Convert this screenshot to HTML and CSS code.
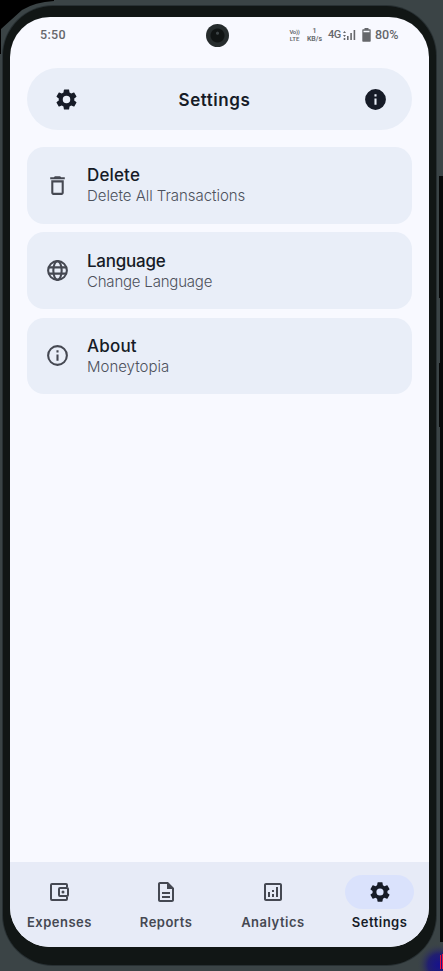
FILE: index.html
```html
<!DOCTYPE html>
<html lang="en">
<head>
<meta charset="utf-8">
<title>Settings</title>
<meta name="viewport" content="width=device-width, initial-scale=1">
<link rel="stylesheet" href="styles.css">
</head>
<body>
<svg class="casing" viewBox="0 0 443 971" aria-hidden="true">
  <defs><radialGradient id="glow"><stop offset="0" stop-color="#17128c"/><stop offset=".5" stop-color="#211f70"/><stop offset="1" stop-color="#3b4446" stop-opacity="0"/></radialGradient></defs>
  <path fill="#3b4446" d="M0 0h443v971H0z"/>
  <path fill="#000" d="M0 0h54v1Q35 2 22 10L1 29v25H0z"/>
  <path fill="#070909" d="M439 176h4v766h-3V427h-1v-64h1v-65h-1z"/>
  <circle cx="439" cy="965" r="22" fill="url(#glow)"/>
  <path fill="#ed1245" d="M440 955h1v14h-1zM442 954h1v15h-1z"/>
  <rect x="2" y="5" width="435" height="961" rx="51" fill="#283033"/>
  <rect x="3" y="6" width="433" height="959" rx="50" fill="#111615"/>
</svg>
<div class="screen">
  <header class="status">
    <span class="clock">5:50</span>
    <div class="indicators">
      <span class="volte"><b>Vo))</b><b>LTE</b></span>
      <span class="speed"><b>1</b><b>KB/s</b></span>
      <span class="net">4G</span>
      <svg class="signal" viewBox="0 0 13 12"><path fill="#65676b" d="M0 4l1.5-2L3 4zM0 6l1.5 2L3 6zM.7 9h1.6v2H.7zM4 7h1.6v4H4zM7.3 4h1.6v7H7.3zM10.6 1h1.6v10h-1.6z"/></svg>
      <svg class="battery" viewBox="0 0 9 14"><path fill="#65676b" d="M2.5 0h4v1.3H8q.7 0 .7.7v11q0 .7-.7.7H1q-.7 0-.7-.7V2q0-.7.7-.7h1.5z"/><path fill="#f8f9ff" d="M1.5 2.7h6v1.6h-6z"/></svg>
      <span class="percent">80%</span>
    </div>
    <span class="camera"></span>
  </header>
  <main>
    <div class="titlebar">
      <svg class="icon" viewBox="0 0 24 24"><use href="#gear"/></svg>
      <h1>Settings</h1>
      <svg class="icon" viewBox="0 0 24 24"><path d="M12 2a10 10 0 1 0 0 20 10 10 0 0 0 0-20zm1 15h-2v-6h2zm0-8h-2V7h2z"/></svg>
    </div>
    <section class="card">
      <svg class="icon" viewBox="0 0 24 24"><path d="M6 19c0 1.1.9 2 2 2h8c1.100 0 2-.9 2-2V7H6zM8 9h8v10H8zm7.500-5-1-1h-5l-1 1H5v2h14V4z"/></svg>
      <div><h2 class="delete">Delete</h2><p class="delete-note">Delete All Transactions</p></div>
    </section>
    <section class="card">
      <svg class="icon line" viewBox="0 0 24 24"><circle cx="12" cy="12" r="9"/><ellipse cx="12" cy="12" rx="4" ry="9"/><path d="M3.600 9h16.800M3.600 15h16.800"/></svg>
      <div><h2 class="language">Language</h2><p class="language-note">Change Language</p></div>
    </section>
    <section class="card">
      <svg class="icon" viewBox="0 0 24 24"><path d="M11 7h2v2h-2zm0 4h2v6h-2zm1-9a10 10 0 1 0 0 20 10 10 0 0 0 0-20zm0 18a8 8 0 1 1 0-16 8 8 0 0 1 0 16z"/></svg>
      <div><h2 class="about">About</h2><p>Moneytopia</p></div>
    </section>
  </main>
  <nav>
    <a class="tab"><span class="pill"><svg class="icon line" viewBox="0 0 24 24"><path d="M20 7V5q0-1-1-1H5Q4 4 4 5v14q0 1 1 1h14q1 0 1-1v-2"/><rect x="12" y="8" width="9" height="8" rx="1"/><circle class="dot" cx="16" cy="12" r="1.500"/></svg></span><span>Expenses</span></a>
    <a class="tab"><span class="pill"><svg class="icon" viewBox="0 0 24 24"><path d="M8 16h8v2H8zm0-4h8v2H8zm6-10H6c-1.100 0-2 .9-2 2v16c0 1.100.9 2 2 2h12c1.100 0 2-.9 2-2V8zm4 18H6V4h7v5h5z"/></svg></span><span>Reports</span></a>
    <a class="tab"><span class="pill"><svg class="icon" viewBox="0 0 24 24"><path d="M19 3H5c-1.100 0-2 .9-2 2v14c0 1.100.9 2 2 2h14c1.100 0 2-.9 2-2V5c0-1.100-.9-2-2-2zm0 16H5V5h14zM7 12h2v5H7zm8-5h2v10h-2zm-4 7h2v3h-2zm0-4h2v2h-2z"/></svg></span><span>Analytics</span></a>
    <a class="tab active"><span class="pill"><svg class="icon" viewBox="0 0 24 24"><path id="gear" d="M19.500 12c0-.3 0-.6-.1-.9l2-1.600c.2-.1.200-.4.100-.6l-2-3.500c-.1-.2-.4-.3-.6-.2l-2.400 1a7 7 0 0 0-1.600-.9l-.4-2.600c0-.3-.2-.4-.5-.4h-4c-.3 0-.5.200-.5.400l-.4 2.600a7 7 0 0 0-1.600.9l-2.400-1c-.2-.1-.5 0-.6.2l-2 3.500c-.1.200-.1.500.1.600l2 1.600a8 8 0 0 0 0 1.800l-2 1.600c-.2.100-.2.400-.1.600l2 3.500c.1.200.4.300.6.200l2.400-1c.5.400 1 .7 1.600.9l.4 2.600c0 .3.200.4.500.4h4c.3 0 .5-.2.500-.4l.4-2.600a7 7 0 0 0 1.600-.9l2.400 1c.2.100.5 0 .6-.2l2-3.500c.1-.2.100-.5-.1-.6l-2-1.600c.1-.3.100-.6.100-.9zM12 15.600a3.600 3.600 0 1 1 0-7.200 3.600 3.600 0 0 1 0 7.200z"/></svg></span><span>Settings</span></a>
  </nav>
</div>
</body>
</html>
```
FILE: styles.css
```css
* { box-sizing: border-box; }
body {
  margin: 0;
  width: 443px;
  height: 971px;
  padding: 17px 14px 24px 10px;
  position: relative;
  overflow: hidden;
  font-family: Inter, "Liberation Sans", sans-serif;
  color: #161b27;
}
.casing { position: absolute; inset: 0; width: 443px; height: 971px; }
.screen {
  position: relative;
  height: 930px;
  border-radius: 40px;
  overflow: hidden;
  background: #f8f9ff;
  display: flex;
  flex-direction: column;
}
.status {
  position: relative;
  height: 51px;
  flex: none;
  padding: 9px 30px 0;
  display: flex;
  justify-content: space-between;
  align-items: flex-start;
  font: 500 12.500px/18px Roboto, sans-serif;
  color: #65676b;
}
.clock { letter-spacing: .3px; }
.indicators { display: flex; align-items: center; height: 17px; }
.volte, .speed { display: flex; flex-direction: column; align-items: center; }
.volte b, .speed b { font-weight: 600; }
.volte { width: 11px; margin-right: 6px; font-size: 6px; line-height: 7px; }
.volte b:first-child { letter-spacing: -.3px; }
.speed { width: 17px; margin-right: 5px; font-size: 7px; line-height: 8px; }
.net { font-size: 11px; width: 13px; letter-spacing: -.6px; margin-right: 2px; }
.signal { width: 13px; height: 12px; margin-right: 6px; }
.battery { width: 9px; height: 14px; margin-right: 4px; }
.percent { font-size: 12.500px; width: 24px; }
.camera {
  position: absolute;
  left: 196px;
  top: 7px;
  width: 23px;
  height: 23px;
  border-radius: 50%;
  background: radial-gradient(circle at 50% 40%, #3d4446 0 1px, transparent 2px), radial-gradient(circle, #101414 0 6.500px, #262c2d 7.500px);
}
main { flex: 1; padding: 0 17px; }
h1, h2, p { margin: 0; }
.icon { width: 24px; height: 24px; display: block; fill: currentColor; flex: none; }
.line { fill: none; stroke: currentColor; stroke-width: 2; }
.dot { fill: currentColor; stroke: none; }
.titlebar {
  height: 62px;
  border-radius: 31px;
  background: #e9eef8;
  margin-bottom: 17px;
  padding: 0 24px 0 27px;
  display: grid;
  grid-template-columns: 25px 1fr 25px;
  align-items: center;
}
.titlebar .icon { width: 25px; height: 25px; }
h1 {
  font-size: 17px;
  line-height: 24px;
  font-weight: 600;
  letter-spacing: .55px;
  text-align: center;
  padding: 1px 13px 0 0;
}
.card {
  height: 76.700px;
  margin-bottom: 8.600px;
  border-radius: 17px;
  background: #e9eef8;
  display: flex;
  align-items: center;
  padding: 0 17.500px;
  gap: 17.500px;
}
.card .icon { width: 25px; height: 25px; color: #454852; }
h2 { font-size: 17px; line-height: 22px; font-weight: 500; white-space: nowrap; }
p { font-size: 15px; line-height: 20px; font-weight: 300; color: #4d515c; white-space: nowrap; }
.delete { letter-spacing: .15px; }
.delete-note { letter-spacing: -.04px; }
.language { letter-spacing: -.25px; }
.language-note { letter-spacing: -.2px; }
.about { letter-spacing: .2px; }
nav {
  height: 85px;
  flex: none;
  background: #e7ebf7;
  display: grid;
  grid-template-columns: repeat(4, 1fr);
  gap: 8px;
  padding-top: 13px;
}
.tab {
  display: flex;
  flex-direction: column;
  align-items: center;
  font-size: 13px;
  line-height: 18px;
  font-weight: 600;
  letter-spacing: .5px;
  color: #454852;
  gap: 4px;
}
.pill { width: 69px; height: 34px; border-radius: 17px; display: grid; place-items: center; }
.active { color: #161b27; }
.active .pill { background: #dae2fc; }
```
